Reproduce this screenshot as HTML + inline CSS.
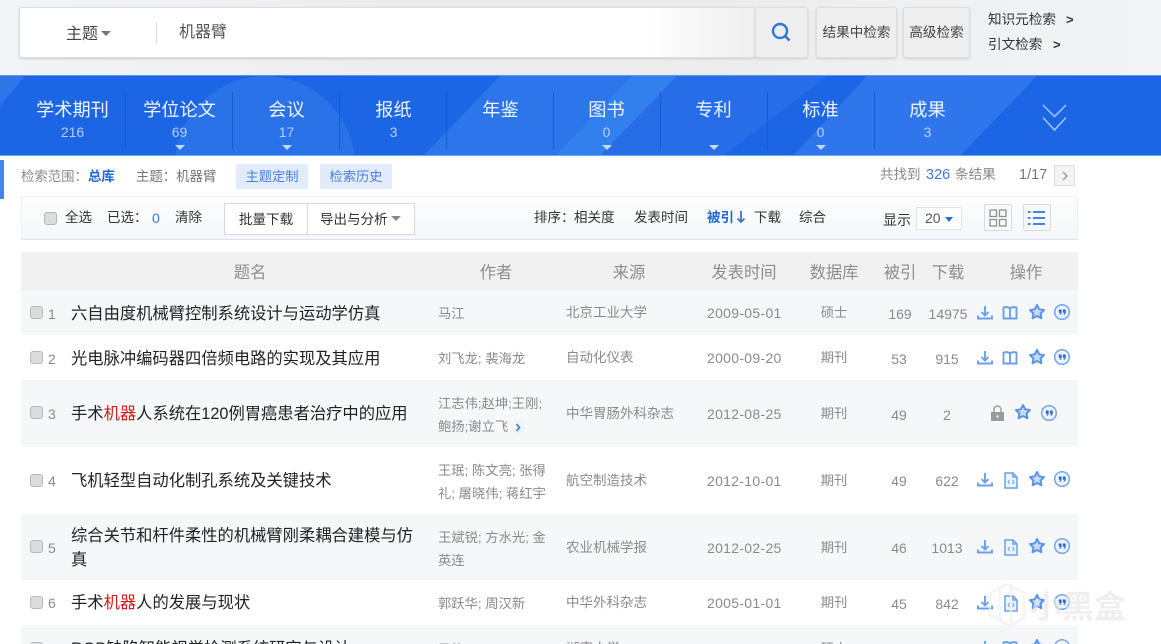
<!DOCTYPE html>
<html lang="zh"><head><meta charset="utf-8"><title>机器臂</title>
<style>
*{box-sizing:border-box;margin:0;padding:0}
html,body{width:1161px;height:644px;overflow:hidden;background:#fff}
body{position:relative;font-family:"Liberation Sans","Noto Sans CJK SC",sans-serif;color:#333}
.a{position:absolute;white-space:nowrap}
.c{text-align:center;transform:translateX(-50%)}
.row{position:absolute;left:21px;width:1057px}
.g{background:#f6f7f9}
.t{font-size:16.3px;color:#222;line-height:24px;left:71px;width:350px;white-space:normal;margin-top:1px}
.au{font-size:13.3px;color:#8a8a8a;line-height:23px;left:438px;width:115px;white-space:normal;margin-top:1px}
.src{font-size:13.5px;color:#8a8a8a;left:566px;line-height:18px;margin-top:1px}
.dt{font-size:14px;color:#8a8a8a;left:707px;line-height:18px;letter-spacing:.3px;margin-top:1px}
.db{font-size:13.300px;color:#8a8a8a;left:834px;line-height:18px;margin-top:1px}
.n{font-size:14px;color:#8a8a8a;line-height:18px;margin-top:1px}
.idx{font-size:14px;color:#8a8a8a;left:48px;line-height:18px;margin-top:1px}
.cb{position:absolute;left:30px;width:13px;height:13px;background:#dcdcdc;border:1px solid #b9b9b9;border-radius:3px}
.tab{position:absolute;top:76px;width:107px;text-align:center;color:#fff}
.tab b{display:block;font-weight:400;font-size:18.200px;line-height:24px;margin-top:22px;color:#eef4ff}
.tab i{display:block;font-style:normal;font-size:14px;line-height:18px;margin-top:1px;color:#b5cff8}
.tri{position:absolute;width:0;height:0;border-left:5px solid transparent;border-right:5px solid transparent;border-top:5px solid #c4d9fa;top:145px}
.sep{position:absolute;top:92px;width:1px;height:58px;background:#1759d4}
.btn{position:absolute;top:7px;height:51px;background:#eeeeee;border:1px solid #dedede;border-radius:3px;box-shadow:0 1px 2px #ccc;font-size:13.600px;color:#444;text-align:center;line-height:49px}
.th{position:absolute;top:263px;font-size:16.300px;color:#8d8d8d;line-height:20px;transform:translateX(-50%);white-space:nowrap}
.f{font-size:13.500px;line-height:18px;color:#333;top:209px}
svg.i{position:absolute;overflow:visible}
</style></head><body>
<svg width="0" height="0" style="position:absolute"><defs>
<g id="dl" fill="none" stroke="#6a9fee" stroke-width="1.900"><path d="M8 1v9M4.500 7l3.500 3.500L11.500 7M1 10.500v3h14v-3"/></g>
<g id="bk" fill="none" stroke="#6a9fee" stroke-width="1.900"><path d="M8 3.500C6.500 2 3.500 2 1.500 2.500v11h5C7.500 13.500 8 14 8 14.500c0-.5.5-1 1.500-1h5v-11C12.500 2 9.500 2 8 3.500zM8 3.500v11"/></g>
<g id="st" fill="#c6daf6" stroke="#5a94ea" stroke-width="2"><path d="M8 1l2.200 4.300 4.800.8-3.400 3.400.8 4.800L8 12l-4.400 2.300.8-4.800L1 6.100l4.800-.8z" stroke-linejoin="round"/></g>
<g id="qt"><circle cx="8" cy="8" r="7.300" fill="#eef4fc" stroke="#76a6ee" stroke-width="1.500"/><path d="M4.800 5.500h2.800v3c0 1.300-.8 2.200-1.900 2.400l-.3-.9c.6-.2 1-.6 1-1.300H4.800zM8.900 5.500h2.800v3c0 1.300-.8 2.200-1.900 2.400l-.3-.9c.6-.2 1-.6 1-1.300H8.900z" fill="#2a66d9"/></g>
<g id="fi" fill="#eef4fc" stroke="#6a9fee" stroke-width="1.500"><path d="M2 1h8l4 4v11H2zM10 1v4h4"/><path d="M6.500 8L5 10l1.500 2M9.500 8l1.500 2-1.500 2" stroke-width="1" fill="none"/></g>
</defs></svg>

<!-- top -->
<div class="a" style="left:0;top:0;width:1161px;height:76px;background:linear-gradient(90deg,#f1f5f8 0,#ececee 35%,#ececed 60%,#f2f4f6 100%)"></div>
<div class="a" style="left:19px;top:7px;width:737px;height:51px;background:linear-gradient(90deg,#fff 0,#fff 85%,#efefef 100%);border:1px solid #dedede;border-radius:3px;box-shadow:0 1px 2px #ccc"></div>
<div class="a" style="left:66px;top:24px;font-size:16px;line-height:22px;color:#444">主题</div>
<div class="a" style="left:101px;top:31px;border-left:5px solid transparent;border-right:5px solid transparent;border-top:5px solid #777"></div>
<div class="a" style="left:156px;top:22px;width:1px;height:22px;background:#ddd"></div>
<div class="a" style="left:179px;top:22px;font-size:16px;line-height:22px;color:#555">机器臂</div>
<div class="btn" style="left:755px;width:53px"></div>
<svg class="i" style="left:770px;top:21px" width="22" height="22" viewBox="0 0 22 22"><circle cx="10" cy="10" r="7" fill="none" stroke="#2a78dc" stroke-width="2.400"/><path d="M15 15l4.500 4.500" stroke="#2a78dc" stroke-width="2.600"/></svg>
<div class="btn" style="left:816px;width:81px">结果中检索</div>
<div class="btn" style="left:903px;width:67px">高级检索</div>
<div class="a" style="left:988px;top:10px;font-size:13.600px;line-height:19px;color:#333">知识元检索</div>
<div class="a" style="left:1066px;top:10px;font-size:13px;font-weight:700;line-height:19px;color:#333">&gt;</div>
<div class="a" style="left:988px;top:35px;font-size:13.600px;line-height:19px;color:#333">引文检索</div>
<div class="a" style="left:1053px;top:35px;font-size:13px;font-weight:700;line-height:19px;color:#333">&gt;</div>

<!-- blue band -->
<div class="a" style="left:0;top:75px;width:1161px;height:81px;overflow:hidden;background:#1c65e4;border-top:1px solid #5c96f0;border-bottom:1px solid #6ea4f4">
<svg width="1161" height="80" style="position:absolute;left:0;top:0"><circle cx="265" cy="90" r="90" fill="#2a72e8"/><path d="M423 80L500 0H677L600 80z" fill="#2c75ea"/><path d="M555 80L632 0H677L600 80z" fill="#3280ee"/><path d="M600 80L677 0H827L723 80z" fill="#266de7"/><path d="M793 80L867 0H1037L960 80z" fill="#2f76ec"/><path d="M0 30L25 0H0z" fill="#2e76e8"/></svg>
</div>
<div class="sep" style="left:125px"></div><div class="sep" style="left:232px"></div><div class="sep" style="left:339px"></div><div class="sep" style="left:446px"></div><div class="sep" style="left:553px"></div><div class="sep" style="left:660px"></div><div class="sep" style="left:767px"></div><div class="sep" style="left:874px"></div>
<div class="tab" style="left:19px"><b>学术期刊</b><i>216</i></div>
<div class="tab" style="left:126px"><b>学位论文</b><i>69</i></div>
<div class="tab" style="left:233px"><b>会议</b><i>17</i></div>
<div class="tab" style="left:340px"><b>报纸</b><i>3</i></div>
<div class="tab" style="left:447px"><b>年鉴</b></div>
<div class="tab" style="left:553px"><b>图书</b><i>0</i></div>
<div class="tab" style="left:660px"><b>专利</b></div>
<div class="tab" style="left:767px"><b>标准</b><i>0</i></div>
<div class="tab" style="left:874px"><b>成果</b><i>3</i></div>
<div class="tri" style="left:175px"></div><div class="tri" style="left:282px"></div><div class="tri" style="left:602px"></div><div class="tri" style="left:709px"></div><div class="tri" style="left:816px"></div>
<svg class="i" style="left:1042px;top:104px" width="25" height="27" viewBox="0 0 26 28" fill="none" stroke="#a9c8f9" stroke-width="1.500"><path d="M1 1l12 12L25 1M1 14l12 13L25 14"/></svg>

<!-- filter line -->
<div class="a" style="left:0;top:160px;width:4px;height:39px;background:#3f86f2"></div>
<div class="a" style="left:21px;top:168px;font-size:13.400px;line-height:18px;color:#8a8a8a">检索范围：<span style="color:#2368d8;font-weight:700">总库</span></div>
<div class="a" style="left:136px;top:168px;font-size:13.400px;line-height:18px;color:#777">主题：机器臂</div>
<div class="a" style="left:236px;top:164px;width:72px;height:25px;background:#e1ebfb;border-radius:2px;text-align:center;font-size:13.300px;line-height:26px;color:#4a7fd8">主题定制</div>
<div class="a" style="left:320px;top:164px;width:72px;height:25px;background:#e1ebfb;border-radius:2px;text-align:center;font-size:13.300px;line-height:26px;color:#4a7fd8">检索历史</div>
<div class="a" style="left:880px;top:166px;font-size:13.500px;line-height:18px;color:#888">共找到</div>
<div class="a" style="left:926px;top:166px;font-size:14.500px;line-height:18px;color:#3c78dc">326</div>
<div class="a" style="left:955px;top:166px;font-size:13.600px;line-height:18px;color:#888">条结果</div>
<div class="a" style="left:1019px;top:166px;font-size:14.500px;line-height:18px;color:#777">1/17</div>
<div class="a" style="left:1054px;top:165px;width:21px;height:21px;background:#f3f3f3;border:1px solid #ddd;text-align:center"></div>
<svg class="i" style="left:1061px;top:171px" width="8" height="10" viewBox="0 0 8 10" fill="none" stroke="#999" stroke-width="1.400"><path d="M2 1l4 4-4 4"/></svg>

<!-- toolbar -->
<div class="a" style="left:21px;top:196px;width:1057px;height:44px;background:linear-gradient(#fcfdfd,#f4f7fb);border:1px solid #eef0f4;border-bottom-color:#dde2ec"></div>
<div class="a" style="left:44px;top:212px;width:13px;height:13px;background:#dcdcdc;border:1px solid #b5b5b5;border-radius:3px"></div>
<div class="a f" style="left:65px">全选</div>
<div class="a f" style="left:107px">已选：</div>
<div class="a f" style="left:152px;color:#3c78dc;font-size:14px">0</div>
<div class="a f" style="left:175px">清除</div>
<div class="a" style="left:224px;top:203px;width:84px;height:32px;background:#fff;border:1px solid #d8d8d8;text-align:center;font-size:13.600px;line-height:31px;color:#333">批量下载</div>
<div class="a" style="left:307px;top:203px;width:108px;height:32px;background:#fff;border:1px solid #d8d8d8;font-size:13.500px;line-height:31px;color:#333;padding-left:12px">导出与分析</div>
<div class="a" style="left:391px;top:216px;border-left:5px solid transparent;border-right:5px solid transparent;border-top:5px solid #888"></div>
<div class="a f" style="left:534px">排序：</div>
<div class="a f" style="left:574px">相关度</div>
<div class="a f" style="left:634px">发表时间</div>
<div class="a f" style="left:707px;color:#2368d8;font-weight:700">被引</div>
<svg class="i" style="left:736px;top:210px" width="10" height="14" viewBox="0 0 10 14" fill="none" stroke="#3a70cc" stroke-width="1.800"><path d="M5 1v11M1.500 8.500L5 12l3.500-3.500"/></svg>
<div class="a f" style="left:754px">下载</div>
<div class="a f" style="left:799px">综合</div>
<div class="a f" style="left:883px;top:211px;font-size:14px">显示</div>
<div class="a" style="left:916px;top:207px;width:46px;height:23px;background:#fff;border:1px solid #dfe2e8;font-size:14px;line-height:21px;padding-left:8px;color:#555">20</div>
<div class="a" style="left:945px;top:217px;border-left:4px solid transparent;border-right:4px solid transparent;border-top:5px solid #2a68d4"></div>
<div class="a" style="left:984px;top:204px;width:28px;height:27px;background:#f8f9fb;border:1px solid #d8dbe0;border-radius:2px"></div>
<svg class="i" style="left:989px;top:209px" width="18" height="18" viewBox="0 0 18 18" fill="none" stroke="#8f8f8f" stroke-width="1.300"><path d="M1 1h6.500v6.500H1zM10.500 1H17v6.500h-6.500zM1 10.500h6.500V17H1zM10.500 10.500H17V17h-6.500z"/></svg>
<div class="a" style="left:1023px;top:204px;width:28px;height:27px;background:#f8f9fb;border:1px solid #d8dbe0;border-radius:2px"></div>
<svg class="i" style="left:1028px;top:210px" width="18" height="16" viewBox="0 0 18 16" fill="none" stroke="#3d84f0" stroke-width="2"><path d="M0 2h2.500M5 2h12M0 8h2.500M5 8h12M0 14h2.500M5 14h12"/></svg>

<!-- table -->
<div class="row" style="top:252px;height:38px;background:#f1f1f1"></div>
<div class="th" style="left:250px">题名</div><div class="th" style="left:496px">作者</div><div class="th" style="left:629px">来源</div><div class="th" style="left:744px">发表时间</div><div class="th" style="left:834px">数据库</div><div class="th" style="left:900px">被引</div><div class="th" style="left:948px">下载</div><div class="th" style="left:1026px">操作</div>

<div class="row g" style="top:290px;height:45px"></div>
<div class="row g" style="top:380px;height:67px"></div>
<div class="row g" style="top:514px;height:66px"></div>
<div class="row g" style="top:625px;height:19px"></div>

<!-- r1 -->
<div class="cb" style="top:306px"></div><div class="a idx" style="top:304px">1</div>
<div class="a t" style="top:301px">六自由度机械臂控制系统设计与运动学仿真</div>
<div class="a au" style="top:301px">马江</div><div class="a src" style="top:303px">北京工业大学</div><div class="a dt" style="top:303px">2009-05-01</div><div class="a db c" style="top:303px">硕士</div>
<div class="a n c" style="left:900px;top:304px">169</div><div class="a n c" style="left:948px;top:304px">14975</div>
<svg class="i" style="left:977px;top:305px" width="16" height="16"><use href="#dl"/></svg><svg class="i" style="left:1002px;top:305px" width="16" height="16"><use href="#bk"/></svg><svg class="i" style="left:1029px;top:304px" width="16" height="16"><use href="#st"/></svg><svg class="i" style="left:1054px;top:304px" width="16" height="16"><use href="#qt"/></svg>
<!-- r2 -->
<div class="cb" style="top:351px"></div><div class="a idx" style="top:349px">2</div>
<div class="a t" style="top:346px">光电脉冲编码器四倍频电路的实现及其应用</div>
<div class="a au" style="top:346px">刘飞龙; 裴海龙</div><div class="a src" style="top:348px">自动化仪表</div><div class="a dt" style="top:348px">2000-09-20</div><div class="a db c" style="top:348px">期刊</div>
<div class="a n c" style="left:899px;top:349px">53</div><div class="a n c" style="left:947px;top:349px">915</div>
<svg class="i" style="left:977px;top:350px" width="16" height="16"><use href="#dl"/></svg><svg class="i" style="left:1002px;top:350px" width="16" height="16"><use href="#bk"/></svg><svg class="i" style="left:1029px;top:349px" width="16" height="16"><use href="#st"/></svg><svg class="i" style="left:1054px;top:349px" width="16" height="16"><use href="#qt"/></svg>
<!-- r3 -->
<div class="cb" style="top:406px"></div><div class="a idx" style="top:404px">3</div>
<div class="a t" style="top:401px">手术<span style="color:#d01c1c">机器</span>人系统在120例胃癌患者治疗中的应用</div>
<div class="a au" style="top:391px">江志伟;赵坤;王刚;<br>鲍扬;谢立飞</div><div class="a src" style="top:404px">中华胃肠外科杂志</div><div class="a dt" style="top:404px">2012-08-25</div><div class="a db c" style="top:404px">期刊</div>
<div class="a" style="left:511px;top:420px;width:14px;height:14px;border-radius:50%;background:#f2f3f5"></div>
<svg class="i" style="left:515px;top:423px" width="7" height="9" viewBox="0 0 7 9" fill="none" stroke="#3f8bd0" stroke-width="1.800"><path d="M1.500 1l3 3.500-3 3.500"/></svg>
<div class="a n c" style="left:899px;top:405px">49</div><div class="a n c" style="left:947px;top:405px">2</div>
<svg class="i" style="left:990px;top:405px" width="15" height="16" viewBox="0 0 15 16"><path d="M4 7V4.500a3.500 3.500 0 017 0V7" fill="none" stroke="#a0a0a0" stroke-width="1.500"/><rect x="1" y="7" width="13" height="9" fill="#9a9a9a"/><rect x="6.500" y="10.500" width="2" height="2" fill="#fff"/></svg>
<svg class="i" style="left:1015px;top:404px" width="16" height="16"><use href="#st"/></svg><svg class="i" style="left:1041px;top:405px" width="16" height="16"><use href="#qt"/></svg>
<!-- r4 -->
<div class="cb" style="top:474px"></div><div class="a idx" style="top:471px">4</div>
<div class="a t" style="top:468px">飞机轻型自动化制孔系统及关键技术</div>
<div class="a au" style="top:458px">王珉; 陈文亮; 张得<br>礼; 屠晓伟; 蒋红宇</div><div class="a src" style="top:471px">航空制造技术</div><div class="a dt" style="top:471px">2012-10-01</div><div class="a db c" style="top:471px">期刊</div>
<div class="a n c" style="left:899px;top:471px">49</div><div class="a n c" style="left:947px;top:471px">622</div>
<svg class="i" style="left:977px;top:472px" width="16" height="16"><use href="#dl"/></svg><svg class="i" style="left:1003px;top:472px" width="15" height="16"><use href="#fi"/></svg><svg class="i" style="left:1029px;top:471px" width="16" height="16"><use href="#st"/></svg><svg class="i" style="left:1054px;top:471px" width="16" height="16"><use href="#qt"/></svg>
<!-- r5 -->
<div class="cb" style="top:540px"></div><div class="a idx" style="top:538px">5</div>
<div class="a t" style="top:523px;width:346px">综合关节和杆件柔性的机械臂刚柔耦合建模与仿<br>真</div>
<div class="a au" style="top:525px">王斌锐; 方水光; 金<br>英连</div><div class="a src" style="top:538px">农业机械学报</div><div class="a dt" style="top:538px">2012-02-25</div><div class="a db c" style="top:538px">期刊</div>
<div class="a n c" style="left:899px;top:538px">46</div><div class="a n c" style="left:947px;top:538px">1013</div>
<svg class="i" style="left:977px;top:539px" width="16" height="16"><use href="#dl"/></svg><svg class="i" style="left:1003px;top:539px" width="15" height="16"><use href="#fi"/></svg><svg class="i" style="left:1029px;top:538px" width="16" height="16"><use href="#st"/></svg><svg class="i" style="left:1054px;top:538px" width="16" height="16"><use href="#qt"/></svg>
<!-- r6 -->
<div class="cb" style="top:596px"></div><div class="a idx" style="top:593px">6</div>
<div class="a t" style="top:590px">手术<span style="color:#d01c1c">机器</span>人的发展与现状</div>
<div class="a au" style="top:591px">郭跃华; 周汉新</div><div class="a src" style="top:593px">中华外科杂志</div><div class="a dt" style="top:593px">2005-01-01</div><div class="a db c" style="top:593px">期刊</div>
<div class="a n c" style="left:899px;top:594px">45</div><div class="a n c" style="left:947px;top:594px">842</div>
<svg class="i" style="left:977px;top:595px" width="16" height="16"><use href="#dl"/></svg><svg class="i" style="left:1003px;top:595px" width="15" height="16"><use href="#fi"/></svg><svg class="i" style="left:1029px;top:594px" width="16" height="16"><use href="#st"/></svg><svg class="i" style="left:1054px;top:594px" width="16" height="16"><use href="#qt"/></svg>
<!-- r7 -->
<div class="cb" style="top:642px"></div><div class="a idx" style="top:639px">7</div>
<div class="a t" style="top:636px">RGB缺陷智能视觉检测系统研究与设计</div>
<div class="a au" style="top:637px">马能</div><div class="a src" style="top:639px">湖南大学</div><div class="a dt" style="top:639px">2013-04-30</div><div class="a db c" style="top:639px">硕士</div>
<div class="a n c" style="left:899px;top:640px">45</div><div class="a n c" style="left:947px;top:640px">1088</div>
<svg class="i" style="left:977px;top:640px" width="16" height="16"><use href="#dl"/></svg><svg class="i" style="left:1002px;top:640px" width="16" height="16"><use href="#bk"/></svg><svg class="i" style="left:1029px;top:639px" width="16" height="16"><use href="#st"/></svg><svg class="i" style="left:1054px;top:639px" width="16" height="16"><use href="#qt"/></svg>

<!-- watermark -->
<svg class="i" style="left:987px;top:582px;opacity:.7" width="40" height="46" viewBox="0 0 40 46" fill="none" stroke="#efefef" stroke-width="2.500"><path d="M20 2L3 11v22l20 11 14-8V11zM13 7v31M24 3v40"/></svg>
<div class="a" style="left:1030px;top:589px;font-size:32px;line-height:36px;color:rgba(230,230,230,.65);font-weight:700">小黑盒</div>
</body></html>
